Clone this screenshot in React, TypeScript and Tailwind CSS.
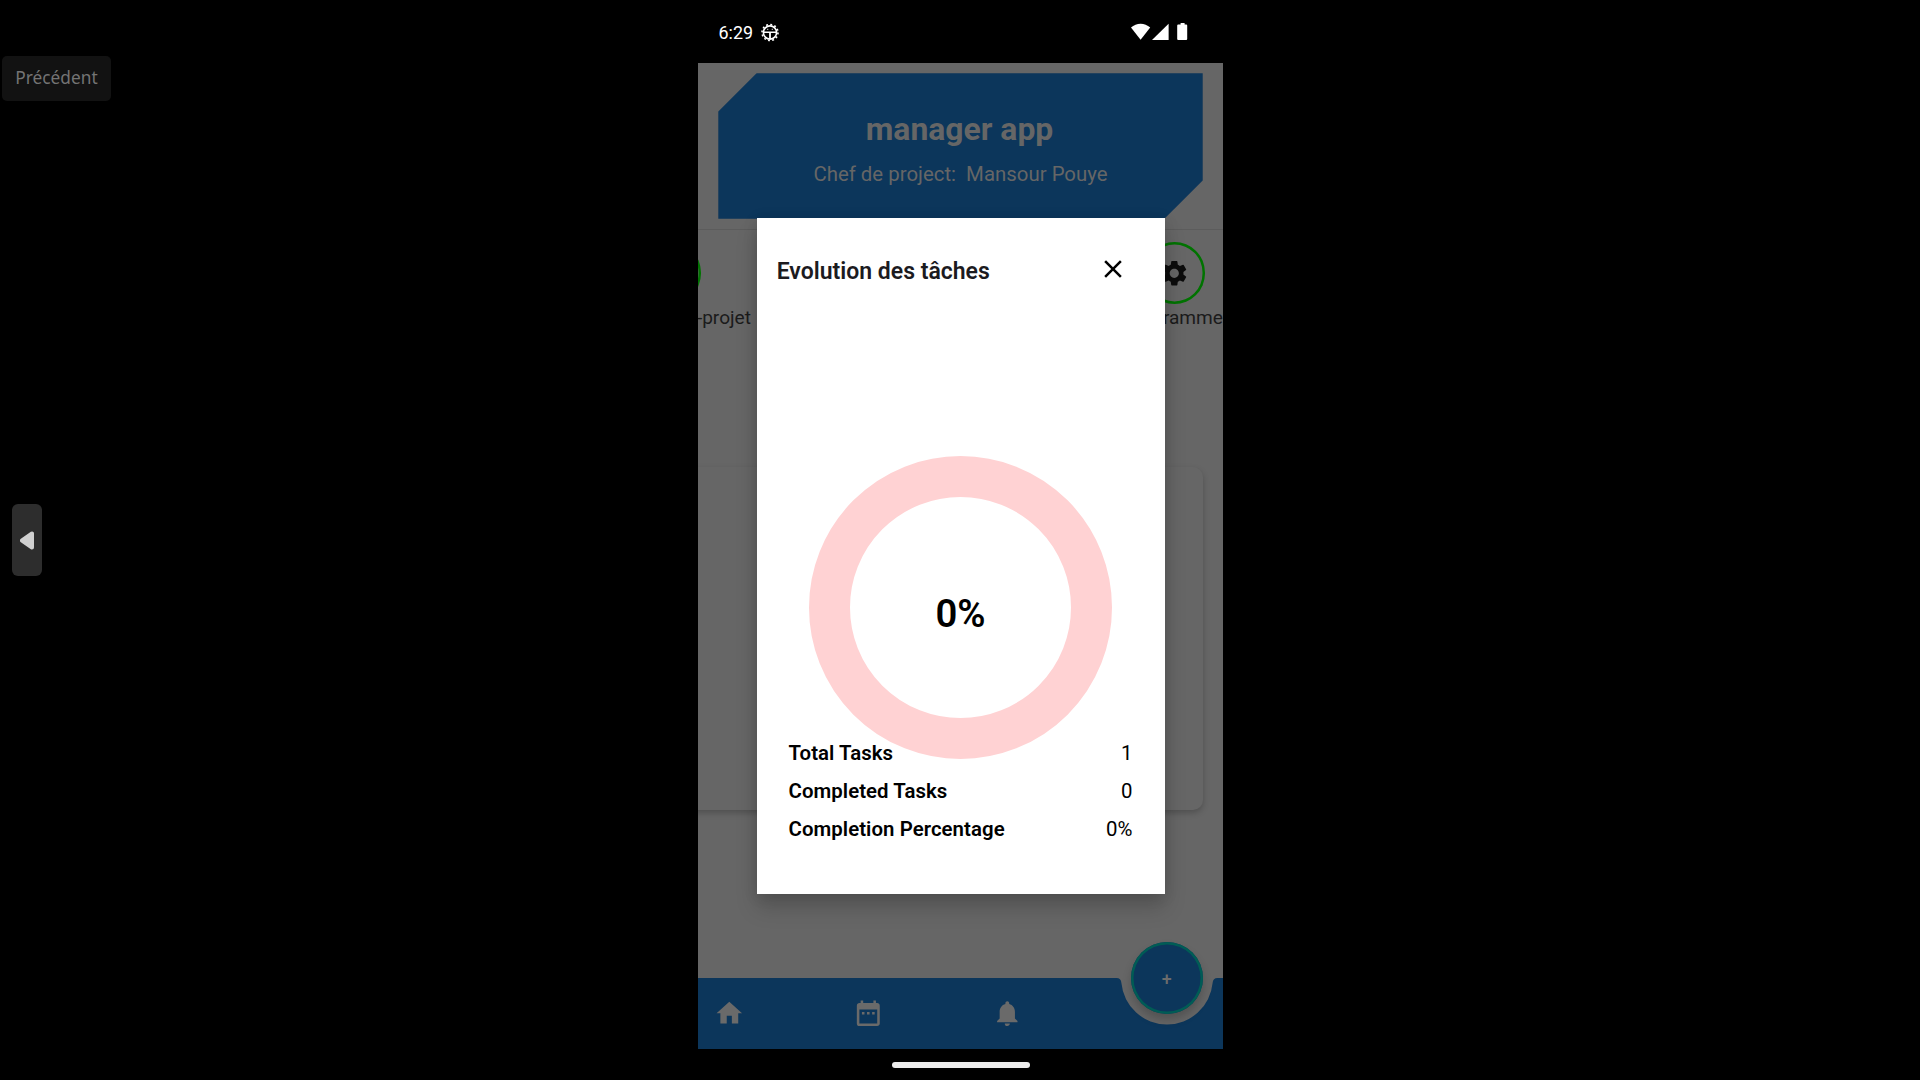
import React from "react";
import { MdHome, MdDateRange, MdNotifications, MdSettings, MdClose } from "react-icons/md";

function DebugIcon() {
  return (
    <svg width="18" height="19" viewBox="0 0 18 19" className="block">
      <circle cx="9" cy="9.5" r="6.6" fill="none" stroke="#fff" strokeWidth="1.6" />
      <circle cx="9" cy="9.5" r="8" fill="none" stroke="#fff" strokeWidth="1.6" strokeDasharray="1.9 2.29" />
      <path d="M3 8.4h12v1.6H3zM8.1 9h1.8v7H8.1z" fill="#fff" />
      <path d="M6 5.8h1.3v1.1H6zM10.700 5.8H12v1.1h-1.300z" fill="#aaa" />
    </svg>
  );
}

function StatusBar() {
  return (
    <div className="flex h-[63px] items-start justify-between pl-[20.5px] pr-[35px] pt-[22.5px]">
      <div className="flex items-center gap-[7.5px]">
        <span className="text-[17.9px] leading-[19px] text-white">6:29</span>
        <DebugIcon />
      </div>
      <svg width="57" height="18" viewBox="0 0 57 18" className="mt-[0.5px] block">
        <path d="M0 4.6C5.4-.6 13.8-.6 19.2 4.6L9.6 16.8z" fill="#fff" />
        <path d="M37.6.8V17H21z" fill="#fff" />
        <path d="M49.6 0h4v1.6h1.6q1 0 1 1V16q0 1-1 1h-8q-1 0-1-1V2.600q0-1 1-1h2.400z" fill="#fff" />
      </svg>
    </div>
  );
}

function Header() {
  return (
    <div className="mx-[20.3px] mt-[10.3px] flex h-[145.4px] flex-col items-center bg-[#0c365b] text-[#666] [clip-path:polygon(38.3px_0,100%_0,100%_107.3px,calc(100%-38.3px)_100%,0_100%,0_38.3px)]">
      <h1 className="-ml-[2px] mt-[36.7px] text-[31.9px] font-bold leading-[38px]">manager app</h1>
      <p className="mt-[14px] whitespace-pre text-[20.4px] leading-[24px]">Chef de project:  Mansour Pouye</p>
    </div>
  );
}

function Categories() {
  return (
    <div className="flex h-[108px] items-start justify-between border-t border-[#5c5c5c] pt-[12px] text-[19.1px] leading-[24px] text-[#1b1b1b]">
      <div className="flex w-[110px] flex-col">
        <div className="-ml-[58px] size-[61.2px] rounded-full shadow-[inset_0_0_0_2.5px_#007300]" />
        <span className="-ml-[57px] mt-[2.3px] w-[110px] whitespace-nowrap text-right">-projet</span>
      </div>
      <div className="flex w-[110px] flex-col items-end">
        <div className="mr-[18px] flex size-[61.2px] items-center justify-center rounded-full shadow-[inset_0_0_0_2.5px_#007300]">
          <MdSettings size={30.6} color="#0c0c0c" />
        </div>
        <span className="mt-[2.3px] whitespace-nowrap">Diagramme</span>
      </div>
    </div>
  );
}

function BottomBar() {
  const items = [MdHome, MdDateRange, MdNotifications];
  return (
    <div className="relative h-[71.3px]">
      <svg className="absolute inset-0" width="525" height="72" viewBox="0 0 525 72">
        <path
          d="M0 0H418.5Q423 0 423.4 5A45.8 45.8 0 0 0 514.6 5Q515 0 519.5 0H525V72H0z"
          fill="#0c365b"
        />
      </svg>
      <div className="relative flex gap-[108.4px] pl-[15.9px] pt-[20.4px] text-[#6a6a6a]">
        {items.map((Icon, i) => (
          <Icon key={i} size={30.6} />
        ))}
      </div>
      <button className="absolute right-[20.5px] top-[-35.5px] flex size-[71.6px] items-center justify-center rounded-full bg-[#0c365b] pt-[2px] text-[17.9px] font-medium text-[#6c6c6c] shadow-[inset_0_0_0_2.5px_#005c55,0_6px_10px_rgba(0,0,0,0.2)]">
        +
      </button>
    </div>
  );
}

function Dialog() {
  const rows = [
    ["Total Tasks", "1"],
    ["Completed Tasks", "0"],
    ["Completion Percentage", "0%"],
  ];
  return (
    <div className="absolute left-[58.5px] top-[155.3px] flex h-[676px] w-[408px] flex-col bg-white shadow-[0_14px_20px_rgba(0,0,0,0.17),0_2px_14px_rgba(0,0,0,0.12)]">
      <div className="flex h-[69.5px] items-end justify-between pl-[20.2px] pr-[38.2px]">
        <h2 className="text-[23px] font-semibold leading-[32px] text-[#1c1b1f]">Evolution des tâches</h2>
        <MdClose size={30} color="#000" className="-mr-[2px] mb-[3.7px]" />
      </div>
      <div className="mx-auto mt-[167.8px] flex size-[303.4px] shrink-0 items-center justify-center rounded-full border-[41px] border-[#ffd2d3]">
        <span className="mt-[13px] text-[38.3px] font-semibold leading-[45px] text-black">0%</span>
      </div>
      <div className="relative -mt-[17.7px] flex flex-col gap-[14px] px-[32px] text-[20.4px] leading-[24px] text-black">
        {rows.map(([label, value]) => (
          <div key={label} className="flex justify-between">
            <span className="font-semibold tracking-[0.06px]">{label}</span>
            <span>{value}</span>
          </div>
        ))}
      </div>
    </div>
  );
}

export default function App() {
  return (
    <div className="flex h-[1080px] w-[1920px] overflow-hidden bg-black font-['Roboto',sans-serif]">
      <aside className="flex w-[698px] flex-col items-start">
        <div className="ml-[2px] mt-[56px] flex h-[45px] w-[109px] items-center justify-center rounded-[5px] bg-[#121212] pb-[2px] font-['Noto_Sans',sans-serif] text-[17.3px] text-[#747474]">
          Précédent
        </div>
        <button className="ml-[12px] mt-[403px] flex h-[72px] w-[30px] items-center justify-center rounded-[6px] bg-[#2d2d2d]">
          <svg width="14" height="19" viewBox="0 0 14 19">
            <path d="M2 9.5L12 2.5V16.5z" fill="#d0d0d0" stroke="#d0d0d0" strokeWidth="4" strokeLinejoin="round" />
          </svg>
        </button>
      </aside>
      <main className="flex w-[525px] flex-col">
        <StatusBar />
        <div className="relative flex h-[986px] flex-col overflow-hidden bg-[#666]">
          <Header />
          <div className="h-[10.8px] shrink-0" />
          <Categories />
          <div className="-ml-[20px] mr-[20.3px] mt-[129.2px] h-[343.5px] rounded-[10px] bg-[#666] shadow-[0_3px_6px_rgba(0,0,0,0.22)]" />
          <div className="flex-1" />
          <BottomBar />
          <Dialog />
        </div>
        <div className="mx-auto mt-[13px] h-[5.5px] w-[138px] rounded-full bg-[#ececec]" />
      </main>
    </div>
  );
}
